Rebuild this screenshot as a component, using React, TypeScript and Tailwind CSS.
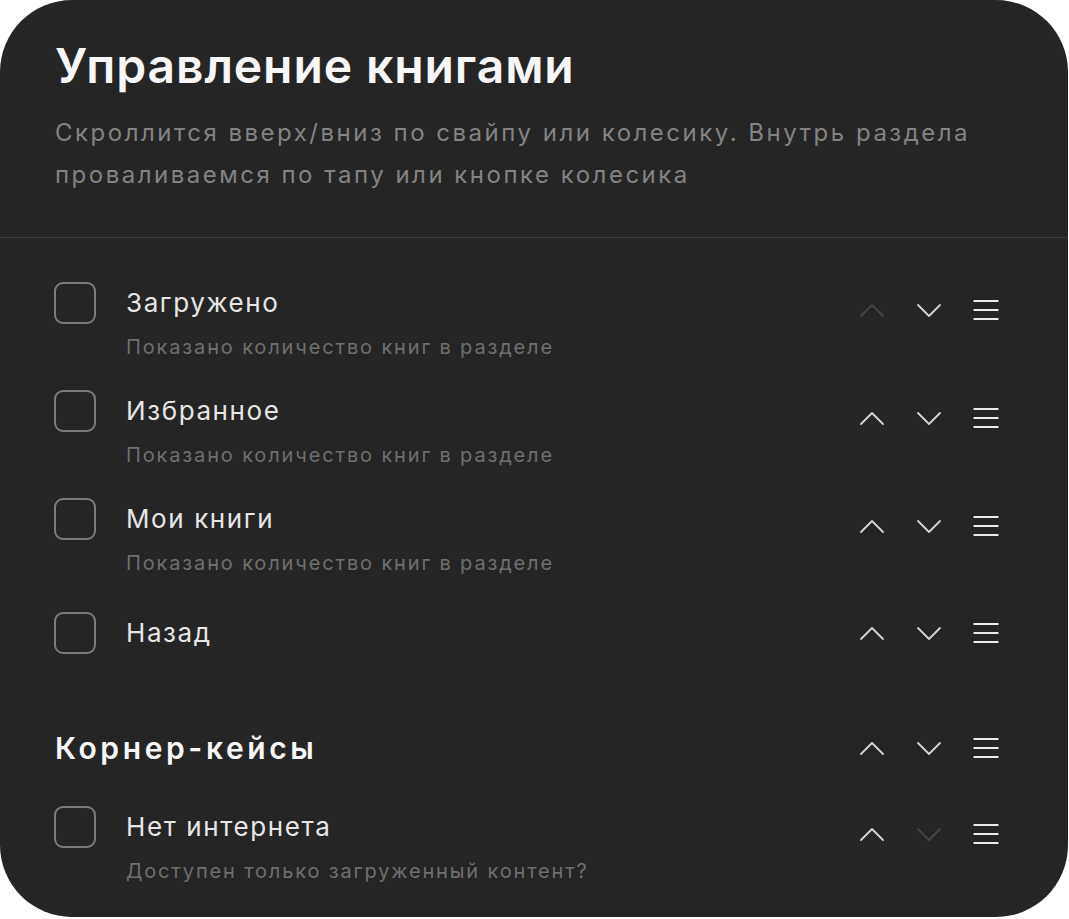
import type { ReactNode } from "react";

type Row = {
  title: string;
  hint?: string;
  upDisabled?: boolean;
  downDisabled?: boolean;
  mt: string;
};

const rows: Row[] = [
  { title: "Загружено", hint: "Показано количество книг в разделе", upDisabled: true, mt: "mt-0" },
  { title: "Избранное", hint: "Показано количество книг в разделе", mt: "mt-[29px]" },
  { title: "Мои книги", hint: "Показано количество книг в разделе", mt: "mt-[29px]" },
  { title: "Назад", mt: "mt-[35px]" },
];

function ChevronUp({ disabled }: { disabled?: boolean }) {
  return (
    <svg width="26" height="26" viewBox="0 0 26 26" fill="none" className={disabled ? "text-[#474747]" : "text-[#d4d4d4]"}>
      <path d="M2 19L13 8L24 19" stroke="currentColor" strokeWidth="1.8" strokeLinecap="round" strokeLinejoin="round" />
    </svg>
  );
}

function ChevronDown({ disabled }: { disabled?: boolean }) {
  return (
    <svg width="26" height="26" viewBox="0 0 26 26" fill="none" className={disabled ? "text-[#474747]" : "text-[#d4d4d4]"}>
      <path d="M2 8L13 19L24 8" stroke="currentColor" strokeWidth="1.8" strokeLinecap="round" strokeLinejoin="round" />
    </svg>
  );
}

function Burger() {
  return (
    <svg width="26" height="26" viewBox="0 0 26 26" fill="none" className="text-[#ececec]">
      <path d="M0.5 4H25.5M0.5 13H25.5M0.5 22H25.5" stroke="currentColor" strokeWidth="2" />
    </svg>
  );
}

function Controls({ upDisabled, downDisabled, className }: { upDisabled?: boolean; downDisabled?: boolean; className?: string }) {
  return (
    <div className={"flex items-center gap-[31px] " + (className ?? "")}>
      <ChevronUp disabled={upDisabled} />
      <ChevronDown disabled={downDisabled} />
      <Burger />
    </div>
  );
}

function Item({ row, children }: { row: Row; children?: ReactNode }) {
  return (
    <div className={"flex items-start justify-between " + row.mt}>
      <div className="flex items-start gap-[30px]">
        <div className="h-[42px] w-[42px] shrink-0 rounded-[9px] border-2 border-[#7c7c7c]" />
        <div>
          <div className="text-[26px] leading-[42px] tracking-[1.6px] text-[#e6e6e6]">{row.title}</div>
          {row.hint && (
            <div className="mt-[9px] text-[20px] leading-[28px] tracking-[1.85px] text-[#6f6f6f]">{row.hint}</div>
          )}
        </div>
      </div>
      <Controls
        upDisabled={row.upDisabled}
        downDisabled={row.downDisabled}
        className={row.hint ? "mt-[15px]" : "mt-[8px]"}
      />
      {children}
    </div>
  );
}

export default function App() {
  return (
    <div className="h-[919px] w-[1069px] bg-white font-['Inter',sans-serif]">
      <div className="h-[917px] w-[1068px] overflow-hidden rounded-[72px] bg-[#252525]">
        <header className="border-b border-[#3c3c3c] px-[55px] pt-[38px] pb-[41px]">
          <h1 className="text-[48px] leading-[56px] font-semibold tracking-[0.9px] text-[#f7f7f7]">Управление книгами</h1>
          <p className="mt-[18px] text-[24px] leading-[42px] tracking-[2.5px] text-[#838383]">
            Скроллится вверх/вниз по свайпу или колесику. Внутрь раздела
            <br />
            проваливаемся по тапу или кнопке колесика
          </p>
        </header>

        <section className="pt-[44px] pr-[69px] pl-[54px]">
          {rows.map((row) => (
            <Item key={row.title} row={row} />
          ))}

          <div className="mt-[73px] flex items-center justify-between">
            <h2 className="pl-px text-[30px] leading-[42px] font-semibold tracking-[3.6px] text-[#f7f7f7]">Корнер-кейсы</h2>
            <Controls />
          </div>

          <Item
            row={{
              title: "Нет интернета",
              hint: "Доступен только загруженный контент?",
              downDisabled: true,
              mt: "mt-[37px]",
            }}
          />
        </section>
      </div>
    </div>
  );
}
